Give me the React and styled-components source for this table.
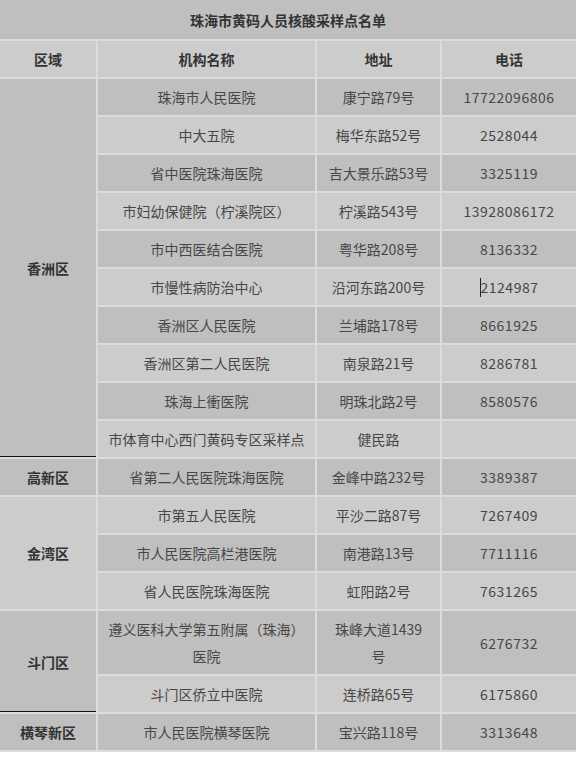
import React from 'react';
import styled, { createGlobalStyle } from 'styled-components';

const GlobalStyle = createGlobalStyle`
  html, body {
    margin: 0;
    padding: 0;
    background: #fff;
  }
  body {
    font-family: 'Noto Sans CJK SC', 'Noto Sans', sans-serif;
  }
`;

const Table = styled.table`
  width: 576px;
  table-layout: fixed;
  border-collapse: collapse;
  font-size: 14px;
  color: #444;
  tr:nth-child(odd) {
    background: #bfbfbf;
  }
  tr:nth-child(even) {
    background: #cccccc;
  }
`;

const Cell = styled.td`
  border: 2px solid #dcdcdc;
  padding: 5px 10px;
  line-height: 26px;
  text-align: center;
  vertical-align: middle;
  white-space: nowrap;
  font-weight: ${(p) => (p.$bold ? 700 : 400)};
  color: ${(p) => (p.$bold ? '#333' : '#474747')};
  letter-spacing: ${(p) => (p.$digits ? '0.5px' : 'normal')};
  box-shadow: ${(p) => (p.$cut ? 'inset 0 -1px 0 #111' : 'none')};
  &:first-child {
    border-left: none;
  }
  &:last-child {
    border-right: none;
  }
`;

const TitleCell = styled(Cell)`
  border-top: none;
  height: 29px;
`;

const Wrapped = styled.span`
  display: block;
  line-height: 26.5px;
`;

const Caret = styled.span`
  display: inline-block;
  width: 0;
  height: 19px;
  border-left: 1px solid #222;
  vertical-align: -4px;
`;

const groups = [
  {
    area: '香洲区',
    cut: true,
    rows: [
      ['珠海市人民医院', '康宁路79号', '17722096806'],
      ['中大五院', '梅华东路52号', '2528044'],
      ['省中医院珠海医院', '吉大景乐路53号', '3325119'],
      ['市妇幼保健院（柠溪院区）', '柠溪路543号', '13928086172'],
      ['市中西医结合医院', '粤华路208号', '8136332'],
      ['市慢性病防治中心', '沿河东路200号', 'caret'],
      ['香洲区人民医院', '兰埔路178号', '8661925'],
      ['香洲区第二人民医院', '南泉路21号', '8286781'],
      ['珠海上衝医院', '明珠北路2号', '8580576'],
      ['市体育中心西门黄码专区采样点', '健民路', ''],
    ],
  },
  { area: '高新区', rows: [['省第二人民医院珠海医院', '金峰中路232号', '3389387']] },
  {
    area: '金湾区',
    rows: [
      ['市第五人民医院', '平沙二路87号', '7267409'],
      ['市人民医院高栏港医院', '南港路13号', '7711116'],
      ['省人民医院珠海医院', '虹阳路2号', '7631265'],
    ],
  },
  {
    area: '斗门区',
    cut: true,
    rows: [
      [['遵义医科大学第五附属（珠海）', '医院'], ['珠峰大道1439', '号'], '6276732'],
      ['斗门区侨立中医院', '连桥路65号', '6175860'],
    ],
  },
  { area: '横琴新区', rows: [['市人民医院横琴医院', '宝兴路118号', '3313648']] },
];

function Lines({ value }) {
  if (value === 'caret') {
    return (
      <>
        <Caret />
        2124987
      </>
    );
  }
  if (Array.isArray(value)) {
    return value.map((line, i) => <Wrapped key={i}>{line}</Wrapped>);
  }
  return value;
}

export default function App() {
  return (
    <>
      <GlobalStyle />
      <Table>
        <colgroup>
          <col style={{ width: 97 }} />
          <col style={{ width: 219 }} />
          <col style={{ width: 125 }} />
          <col style={{ width: 135 }} />
        </colgroup>
        <tbody>
          <tr>
            <TitleCell colSpan={4} $bold>
              珠海市黄码人员核酸采样点名单
            </TitleCell>
          </tr>
          <tr>
            <Cell $bold>区域</Cell>
            <Cell $bold>机构名称</Cell>
            <Cell $bold>地址</Cell>
            <Cell $bold>电话</Cell>
          </tr>
          {groups.map((g) =>
            g.rows.map((row, i) => (
              <tr key={g.area + i}>
                {i === 0 && (
                  <Cell rowSpan={g.rows.length} $bold $cut={g.cut}>
                    {g.area}
                  </Cell>
                )}
                {row.map((v, j) => (
                  <Cell key={j} $digits={j === 2}>
                    <Lines value={v} />
                  </Cell>
                ))}
              </tr>
            )),
          )}
        </tbody>
      </Table>
    </>
  );
}
